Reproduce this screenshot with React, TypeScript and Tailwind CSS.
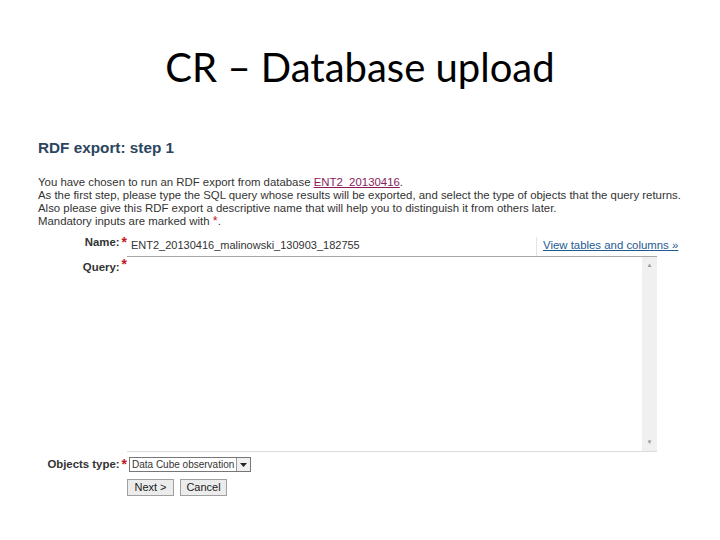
const ARIAL = "font-['Liberation_Sans',Arial,sans-serif]";

function Star({ small = false }: { small?: boolean }) {
  return (
    <span className={small ? "text-[#c4161c] text-[12.5px] leading-[12px]" : "text-[#c4161c] text-[14px] leading-[11px]"}>*</span>
  );
}

export default function App() {
  return (
    <div className="w-[720px] h-[540px] bg-white overflow-hidden relative">
      {/* Slide title */}
      <h1 className="pt-[44px] text-center text-[40px] leading-[46px] text-black font-['Lato','Open_Sans',sans-serif]">
        CR – Database upload
      </h1>

      {/* Screenshot of the web form */}
      <div className={`${ARIAL} pl-[38px] pt-[49px] text-[#333]`}>
        <h2 className="text-[15.3px] leading-[18px] font-bold text-[#2c4560]">RDF export: step 1</h2>

        <div className="mt-[19px] text-[11.4px] leading-[13px] text-[#333]">
          <p>
            You have chosen to run an RDF export from database{" "}
            <span className="text-[#8a1c5c] underline">ENT2_20130416</span>.
          </p>
          <p>As the first step, please type the SQL query whose results will be exported, and select the type of objects that the query returns.</p>
          <p>Also please give this RDF export a descriptive name that will help you to distinguish it from others later.</p>
          <p>
            Mandatory inputs are marked with <Star small />.
          </p>
        </div>

        <div className="mt-[6px] w-[660px] text-[11.4px]">
          {/* Name row */}
          <div className="flex items-end">
            <div className="w-[89px] flex justify-end items-center gap-[2px] pb-[5px] font-bold">
              <span>Name:</span>
              <Star />
            </div>
            <div className="flex items-end">
              <div className="w-[410px] h-[19px] border-r border-[#e4e4e4] pl-[4px] pt-[1px] text-[11px] leading-[14px]">
                ENT2_20130416_malinowski_130903_182755
              </div>
              <a className="ml-[6px] pb-[4px] whitespace-nowrap text-[#1d5a94] underline leading-[13px]">View tables and columns »</a>
            </div>
          </div>

          {/* Query row */}
          <div className="flex">
            <div className="w-[89px] flex justify-end items-start gap-[2px] pt-[3px] font-bold">
              <span>Query:</span>
              <Star />
            </div>
            <div className="w-[530px] h-[196px] border-t border-t-[#a8a8a8] border-b border-b-[#dcdcdc] flex justify-end">
              <div className="w-[15px] h-full bg-[#f0f0f0] flex flex-col justify-between items-center py-[4px] text-[6px] text-[#999]">
                <span>▲</span>
                <span>▼</span>
              </div>
            </div>
          </div>

          {/* Objects type row */}
          <div className="flex items-center mt-[4px]">
            <div className="w-[89px] flex justify-end items-center gap-[2px] font-bold">
              <span>Objects type:</span>
              <Star />
            </div>
            <div className="ml-[2px] flex items-center h-[15px] border border-[#777] bg-white">
              <span className="px-[2px] text-[10px] leading-[13px]">Data Cube observation</span>
              <span className="w-[14px] h-[13px] border-l border-[#999] bg-[#f0f0f0] flex items-center justify-center">
                <svg width="7" height="4" viewBox="0 0 7 4"><path d="M0 0h7L3.5 4z" fill="#222" /></svg>
              </span>
            </div>
          </div>

          {/* Buttons */}
          <div className="flex gap-[6px] mt-[6px] ml-[89px]">
            <button className="h-[17px] w-[47px] border border-[#a0a0a0] bg-[#ececec] text-[11px] leading-[15px] text-[#222]">Next &gt;</button>
            <button className="h-[17px] w-[47px] border border-[#a0a0a0] bg-[#ececec] text-[11px] leading-[15px] text-[#222]">Cancel</button>
          </div>
        </div>
      </div>
    </div>
  );
}
